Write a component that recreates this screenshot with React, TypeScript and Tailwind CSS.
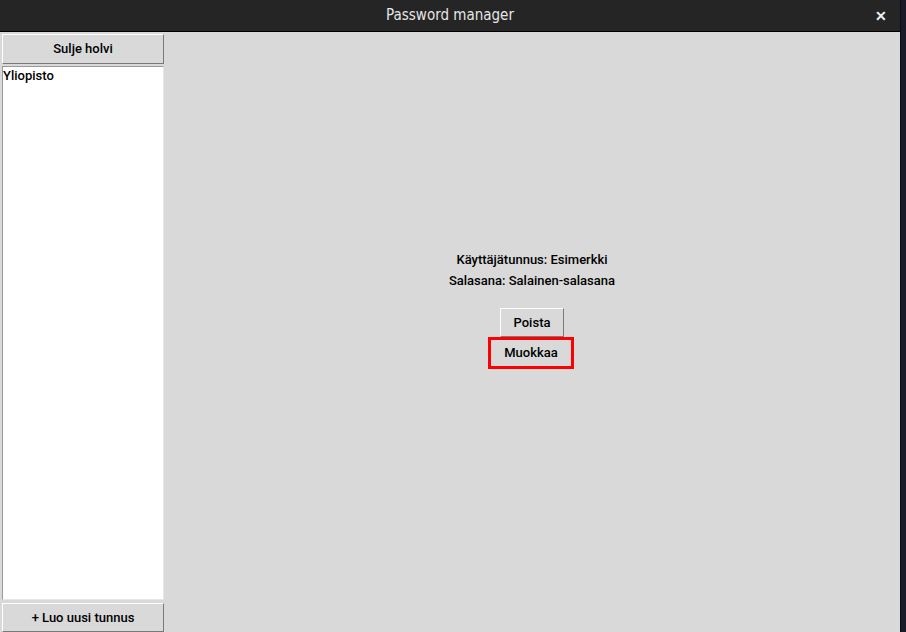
import React from "react";

const btn =
  "flex items-center justify-center bg-[#d9d9d9] border border-t-white border-l-white border-r-[#7a7a7a] border-b-[#7a7a7a] text-[13px] font-medium text-black";

export default function App() {
  return (
    <div className="w-[906px] h-[632px] flex bg-[#1a1b26] overflow-hidden" style={{ fontFamily: 'Roboto, "Liberation Sans", Arial, sans-serif' }}>
      <div className="w-[901px] h-full flex flex-col border-r border-[#0d0d12]">
        <div className="h-[32px] shrink-0 bg-[#252525] border-b border-black flex items-center relative">
          <div className="flex-1 text-center text-[15px] text-[#e6e6e6]" style={{ fontFamily: '"DejaVu Sans Condensed", "DejaVu Sans", sans-serif' }}>
            Password manager
          </div>
          <div className="absolute right-[13px] top-[6px] text-[#f0f0f0] text-[14px] font-bold">✕</div>
        </div>
        <div className="flex-1 flex bg-[#d9d9d9] min-h-0">
          <div className="w-[166px] shrink-0 flex flex-col pl-[2px] pt-[2px] gap-[2px]">
            <div className={btn + " h-[30px] w-[162px]"}>Sulje holvi</div>
            <div className="flex-1 w-[162px] bg-white border border-t-[#9a9a9a] border-l-[#9a9a9a] border-r-[#e6e6e6] border-b-[#e6e6e6] pt-[1px] text-[13px] font-medium text-black leading-[16px]">
              Yliopisto
            </div>
            <div className={btn + " h-[29px] w-[162px] mt-[1px]"}>+ Luo uusi tunnus</div>
          </div>
          <div className="flex-1 flex flex-col items-center justify-center pb-[48px] pr-[2px]">
            <div className="text-[13px] font-medium text-black leading-[21px] mt-[2px]">Käyttäjätunnus: Esimerkki</div>
            <div className="text-[13px] font-medium text-black leading-[21px]">Salasana: Salainen-salasana</div>
            <div className={btn + " mt-[17px] h-[29px] w-[64px]"}>Poista</div>
            <div className="border-[3px] border-[#ff0000] p-[1px] w-[86px] h-[32px] flex mr-[2px]">
              <div className={btn + " flex-1 border-none"}>Muokkaa</div>
            </div>
          </div>
        </div>
      </div>
    </div>
  );
}
